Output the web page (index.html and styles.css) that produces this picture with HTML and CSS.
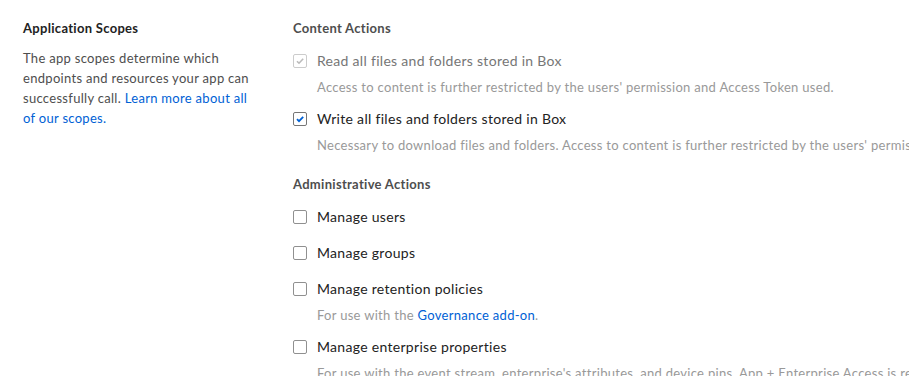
FILE: index.html
```html
<!DOCTYPE html>
<html lang="en">

    <head>
        <meta charset="UTF-8">
        <meta name="viewport" content="width=device-width, initial-scale=1.0">
        <link rel="stylesheet" href="styles.css">
        <title>Application Scopes</title>
    </head>

    <body>
        <div class="page">
            <div class="sidebar">
                <h3 class="sidebar-title">Application Scopes</h3>
                <p class="sidebar-text">The app scopes determine which endpoints and resources your app can successfully call. <a href="#">Learn more about all of our scopes.</a></p>
            </div>

            <div class="scopes">
                <div class="section">
                    <h4 class="section-title">Content Actions</h4>

                    <div class="scope with-desc">
                        <label class="scope-label">
                            <span class="box checked disabled">
                                <svg width="10" height="10" viewBox="0 0 10 10"><polyline points="2,5.2 4,7.2 8.2,2.8" fill="none" stroke="currentColor" stroke-width="1.6"/></svg>
                            </span>
                            <span class="scope-name disabled">Read all files and folders stored in Box</span>
                        </label>
                        <div class="scope-desc">Access to content is further restricted by the users' permission and Access Token used.</div>
                    </div>

                    <div class="scope with-desc">
                        <label class="scope-label">
                            <span class="box checked">
                                <svg width="10" height="10" viewBox="0 0 10 10"><polyline points="2,5.2 4,7.2 8.2,2.8" fill="none" stroke="currentColor" stroke-width="1.8"/></svg>
                            </span>
                            <span class="scope-name">Write all files and folders stored in Box</span>
                        </label>
                        <div class="scope-desc">Necessary to download files and folders. Access to content is further restricted by the users' permission and Access Token used.</div>
                    </div>
                </div>

                <div class="section">
                    <h4 class="section-title">Administrative Actions</h4>

                    <div class="scope">
                        <label class="scope-label">
                            <span class="box"></span>
                            <span class="scope-name">Manage users</span>
                        </label>
                    </div>

                    <div class="scope">
                        <label class="scope-label">
                            <span class="box"></span>
                            <span class="scope-name">Manage groups</span>
                        </label>
                    </div>

                    <div class="scope with-desc">
                        <label class="scope-label">
                            <span class="box"></span>
                            <span class="scope-name">Manage retention policies</span>
                        </label>
                        <div class="scope-desc">For use with the <a href="#">Governance add-on</a>.</div>
                    </div>

                    <div class="scope with-desc">
                        <label class="scope-label">
                            <span class="box"></span>
                            <span class="scope-name">Manage enterprise properties</span>
                        </label>
                        <div class="scope-desc">For use with the event stream, enterprise's attributes, and device pins. App + Enterprise Access is required.</div>
                    </div>
                </div>
            </div>
        </div>
    </body>
</html>
```

FILE: styles.css
```css
html, body {
    margin: 0;
    overflow: hidden;
}

body {
    font-family: Lato, "Open Sans", sans-serif;
    font-size: 13px;
    line-height: 20px;
    letter-spacing: 0.3px;
    color: #222;
    background-color: #fff;
}

a {
    color: #0061d5;
    text-decoration: none;
}

.page {
    display: flex;
    padding: 18px 0 0 23px;
}

.sidebar {
    flex: 0 0 230px;
    margin-right: 40px;
}

.sidebar-title {
    margin: 0;
    font-size: 13px;
    font-weight: bold;
    color: #222;
}

.sidebar-text {
    margin: 10px 0 0;
    color: #4e4e4e;
}

.scopes {
    flex: 1;
    white-space: nowrap;
}

.section + .section {
    padding-top: 7px;
}

.section-title {
    margin: 0 0 13px;
    font-size: 13px;
    font-weight: bold;
    color: #4e4e4e;
}

.scope {
    margin-bottom: 16px;
}

.scope.with-desc {
    margin-bottom: 12px;
}

.scope-label {
    display: flex;
    align-items: center;
}

.box {
    box-sizing: border-box;
    display: flex;
    align-items: center;
    justify-content: center;
    width: 14px;
    height: 14px;
    margin-right: 10px;
    border: 1px solid #909090;
    border-radius: 2px;
    background-color: #fff;
}

.box.checked {
    border-color: #767676;
    color: #0061d5;
}

.box.disabled {
    border-color: #ccc;
    color: #bbb;
}

.scope-name {
    font-size: 14px;
}

.scope-name.disabled {
    color: #767676;
}

.scope-desc {
    margin: 6px 0 0 24px;
    color: #999;
}
```
